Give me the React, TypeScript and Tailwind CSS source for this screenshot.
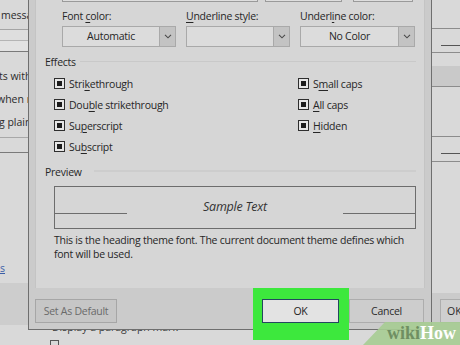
import React from "react";

const Acc = ({ children }: { children: React.ReactNode }) => (
  <span className="underline underline-offset-[2px] decoration-[1px]">{children}</span>
);

function Chevron() {
  return (
    <svg width="8" height="5" viewBox="0 0 8 5" fill="none">
      <path d="M1 0.8l3 3 3-3" stroke="#4a4a4a" strokeWidth="1.1" />
    </svg>
  );
}

function Dropdown({ width, text }: { width: string; text?: string }) {
  return (
    <div className={`${width} flex h-[21px] border border-[#a9a9a9] bg-[#dcdcdc]`}>
      <div className="flex flex-1 items-center justify-center text-[10.5px] leading-none text-[#262626]">
        {text}
      </div>
      <div className="flex w-[16px] items-center justify-center border-l border-[#a9a9a9] bg-[#c3c3c3]">
        <Chevron />
      </div>
    </div>
  );
}

function Check({ children }: { children: React.ReactNode }) {
  return (
    <div className="flex h-[21px] items-center gap-[4px]">
      <div className="flex h-[11px] w-[11px] items-center justify-center border border-[#2e2e2e] bg-[#e6e6e6]">
        <div className="h-[5px] w-[5px] bg-[#1c1c1c]" />
      </div>
      <span className="text-[10.5px] leading-[14px]">{children}</span>
    </div>
  );
}

function LeftStrip() {
  return (
    <div className="flex w-[28px] flex-col overflow-hidden whitespace-nowrap bg-[#d9d9d9] text-[10.5px] leading-[14px] text-[#2b2b2b]">
      <div className="flex h-[29px] items-center pl-[1px]">messa</div>
      <div className="h-px bg-[#a4a4a4]" />
      <div className="h-[10px] bg-[#dedede]" />
      <div className="h-px bg-[#b4b4b4]" />
      <div className="h-[10px] bg-[#e2e2e2]" />
      <div className="h-px bg-[#7a7a7a]" />
      <div className="flex h-[85px] flex-col gap-[9px] pt-[17px]">
        <span className="-ml-[1px]">ts with</span>
        <span className="-ml-[3px]">when re</span>
        <span className="-ml-[1px]">g plain</span>
      </div>
      <div className="h-px bg-[#a8a8a8]" />
      <div className="h-[14px]" />
      <div className="h-px bg-[#7a7a7a]" />
      <div className="h-[130px] pt-[108px]">
        <span className="text-[#3b5fa8] underline">s</span>
      </div>
      <div className="h-[42px] bg-[#cdcdcd]" />
      <div className="h-[5px]" />
    </div>
  );
}

function RightStrip() {
  return (
    <div className="flex w-[28px] flex-col overflow-hidden whitespace-nowrap bg-[#d9d9d9] text-[10.5px] leading-[14px] text-[#2b2b2b]">
      <div className="h-[28px]" />
      <div className="h-px bg-[#8c8c8c]" />
      <div className="h-[16px]" />
      <div className="ml-[9px] h-px bg-[#555555]" />
      <div className="h-[6px]" />
      <div className="h-px bg-[#8c8c8c]" />
      <div className="h-[13px]" />
      <div className="h-[20px] bg-[#c9c9c9]" />
      <div className="h-px bg-[#8c8c8c]" />
      <div className="h-[49px]" />
      <div className="h-px bg-[#8c8c8c]" />
      <div className="h-[16px]" />
      <div className="ml-[9px] h-px bg-[#555555]" />
      <div className="h-[7px]" />
      <div className="h-px bg-[#8c8c8c]" />
      <div className="h-[131px]" />
      <div className="h-[37px] bg-[#cbcbcb] pt-[6px]">
        <div className="ml-[8px] flex h-[24px] items-center border-y border-l border-[#adadad] bg-[#cfcfcf] pl-[6px]">
          OK
        </div>
      </div>
    </div>
  );
}

function Dialog() {
  return (
    <div className="flex w-[404px] flex-col border-x border-b border-[#6f6f6f] bg-[#cbcbcb] tracking-[-0.25px]">
      {/* content panel */}
      <div className="mx-[6px] flex h-[288px] flex-col border-x border-[#c4c4c4] bg-[#d6d6d6] text-[#262626]">
        {/* bottoms of font / style / size boxes */}
        <div className="flex h-[2px]">
          <div className="ml-[26px] w-[196px] border-x border-b border-[#9a9a9a] bg-[#dedede]" />
          <div className="ml-[7px] w-[77px] border-x border-b border-[#9a9a9a] bg-[#dedede]" />
          <div className="ml-[11px] w-[60px] border-x border-b border-[#9a9a9a] bg-[#dedede]" />
        </div>

        <div className="mt-[7px] flex">
          <div className="ml-[26px] flex w-[114px] flex-col gap-[3px]">
            <span className="text-[10.5px] leading-[14px]">
              Font <Acc>c</Acc>olor:
            </span>
            <Dropdown width="w-[114px]" text="Automatic" />
          </div>
          <div className="ml-[10px] flex w-[104px] flex-col gap-[3px]">
            <span className="text-[10.5px] leading-[14px]">
              <Acc>U</Acc>nderline style:
            </span>
            <Dropdown width="w-[104px]" />
          </div>
          <div className="ml-[10px] flex w-[115px] flex-col gap-[3px]">
            <span className="text-[10.5px] leading-[14px]">
              Underl<Acc>i</Acc>ne color:
            </span>
            <Dropdown width="w-[115px]" text="No Color" />
          </div>
        </div>

        {/* Effects */}
        <div className="ml-[9px] mr-[8px] mt-[8px] flex items-center gap-[4px]">
          <span className="text-[10.5px] leading-[14px]">Effects</span>
          <div className="mb-[2px] h-px flex-1 bg-[#c9c9c9]" />
        </div>
        <div className="mt-[4px] flex">
          <div className="ml-[18px] flex w-[244px] flex-col">
            <Check>
              Stri<Acc>k</Acc>ethrough
            </Check>
            <Check>
              Dou<Acc>b</Acc>le strikethrough
            </Check>
            <Check>
              Su<Acc>p</Acc>erscript
            </Check>
            <Check>
              Su<Acc>b</Acc>script
            </Check>
          </div>
          <div className="flex flex-col">
            <Check>
              S<Acc>m</Acc>all caps
            </Check>
            <Check>
              <Acc>A</Acc>ll caps
            </Check>
            <Check>
              <Acc>H</Acc>idden
            </Check>
          </div>
        </div>

        {/* Preview */}
        <div className="ml-[9px] mr-[8px] mt-[8px] flex items-center gap-[12px]">
          <span className="text-[10.5px] leading-[14px]">Preview</span>
          <div className="mb-[2px] h-[2px] flex-1 bg-[#cdcdcd]" />
        </div>
        <div className="ml-[18px] mt-[7px] flex h-[43px] w-[362px] border border-[#6d6d6d]">
          <div className="mt-[26px] h-px w-[72px] bg-[#6d6d6d]" />
          <div className="flex flex-1 justify-center pt-[12px] text-[12.5px] italic leading-[16px] text-[#333333]">
            Sample Text
          </div>
          <div className="mt-[26px] h-px w-[72px] bg-[#6d6d6d]" />
        </div>
        <p className="ml-[18px] mt-[4px] w-[370px] text-[10.5px] leading-[14px]">
          This is the heading theme font. The current document theme defines which
          <br />
          font will be used.
        </p>
      </div>

      {/* footer */}
      <div className="flex h-[41px] items-start text-[10.5px] leading-none">
        <div className="ml-[6px] mt-[11px] flex h-[24px] w-[82px] items-center justify-center border border-[#a6a6a6] bg-[#c6c6c6] text-[#6a6a6a]">
          Set As Default
        </div>
        <div className="relative z-10 ml-[136px] h-[52px] w-[96px] bg-[#3de83d] pl-[9px] pt-[11px]">
          <div className="flex h-[24px] w-[77px] items-center justify-center border border-[#24475f] bg-[#e3e3e3] text-[#222222]">
            OK
          </div>
        </div>
        <div className="mt-[11px] flex h-[24px] w-[75px] items-center justify-center border border-[#adadad] bg-[#cdcdcd] text-[#2b2b2b]">
          Cancel
        </div>
      </div>
    </div>
  );
}

export default function App() {
  return (
    <div className="relative flex h-[345px] w-[460px] flex-col overflow-hidden bg-[#d9d9d9] font-['Open_Sans',sans-serif]">
      <div className="flex h-[330px]">
        <LeftStrip />
        <Dialog />
        <RightStrip />
      </div>
      <div className="h-[15px] overflow-hidden text-[10.5px] leading-[14px] text-[#3a3a3a]">
        <div className="-mt-[10px] ml-[52px] whitespace-nowrap">Display a paragraph mark</div>
        <div className="ml-[50px] mt-[6px] h-[8px] w-[9px] border border-[#555555]" />
      </div>

      {/* wikiHow watermark */}
      <svg className="absolute bottom-0 right-0" width="97" height="23" viewBox="0 0 97 23">
        <polygon points="0,23 22,0 97,0 97,23" fill="#a6cc92" fillOpacity="0.9" />
      </svg>
      <div className="absolute bottom-[3px] right-[4px] font-['Liberation_Serif',serif] text-[18px] font-bold leading-none">
        <span className="text-[#6f8f62]">wiki</span>
        <span className="text-white">How</span>
      </div>
    </div>
  );
}
